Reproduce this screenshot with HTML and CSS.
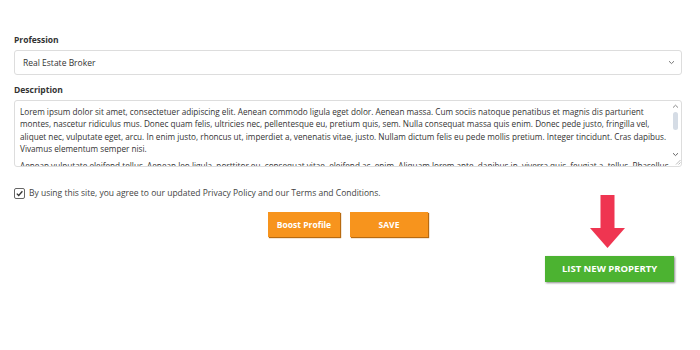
FILE: index.html
```html
<!DOCTYPE html>
<html>
<head>
<meta charset="utf-8">
<link rel="stylesheet" href="styles.css">
</head>
<body>
<div class="page">
  <div class="field">
    <div class="label">Profession</div>
    <div class="select">
      <span>Real Estate Broker</span>
      <svg class="chev" width="7" height="5" viewBox="0 0 7 5"><path d="M1 1.2 L3.5 3.6 L6 1.2" fill="none" stroke="#777" stroke-width="1"/></svg>
    </div>
  </div>
  <div class="field">
    <div class="label">Description</div>
    <div class="textarea">
      <div class="ta-text">
        <p>Lorem ipsum dolor sit amet, consectetuer adipiscing elit. Aenean commodo ligula eget dolor. Aenean massa. Cum sociis natoque penatibus et magnis dis parturient<br>montes, nascetur ridiculus mus. Donec quam felis, ultricies nec, pellentesque eu, pretium quis, sem. Nulla consequat massa quis enim. Donec pede justo, fringilla vel,<br>aliquet nec, vulputate eget, arcu. In enim justo, rhoncus ut, imperdiet a, venenatis vitae, justo. Nullam dictum felis eu pede mollis pretium. Integer tincidunt. Cras dapibus.<br>Vivamus elementum semper nisi.</p>
        <p>Aenean vulputate eleifend tellus. Aenean leo ligula, porttitor eu, consequat vitae, eleifend ac, enim. Aliquam lorem ante, dapibus in, viverra quis, feugiat a, tellus. Phasellus<br>viverra nulla ut metus varius laoreet.</p>
      </div>
      <div class="scrollbar">
        <svg width="7" height="5" viewBox="0 0 7 5"><path d="M1 3.6 L3.5 1.2 L6 3.6" fill="none" stroke="#888" stroke-width="1"/></svg>
        <div class="thumb"></div>
        <div class="track"></div>
        <svg width="7" height="5" viewBox="0 0 7 5"><path d="M1 1.2 L3.5 3.6 L6 1.2" fill="none" stroke="#666" stroke-width="1"/></svg>
        <svg class="grip" width="6" height="6" viewBox="0 0 6 6"><path d="M5.5 1 L1 5.5 M5.5 3.5 L3.5 5.5" stroke="#aaa" stroke-width="0.8"/></svg>
      </div>
    </div>
  </div>
  <label class="agree">
    <span class="checkbox">
      <svg width="9" height="9" viewBox="0 0 9 9"><path d="M1.8 4.6 L3.7 6.5 L7.4 2.3" fill="none" stroke="#333" stroke-width="1.3"/></svg>
    </span>
    <span>By using this site, you agree to our updated Privacy Policy and our Terms and Conditions.</span>
  </label>
  <div class="actions">
    <button class="btn btn-boost">Boost Profile</button>
    <button class="btn btn-save">SAVE</button>
  </div>
  <div class="list-row">
    <div class="list-wrap">
      <svg class="arrow" width="36" height="54" viewBox="0 0 36 54"><path d="M10.5 0 H24.5 V33 H35 L17.5 53 L0 33 H10.5 Z" fill="#ef3551"/></svg>
      <button class="btn btn-list">LIST NEW PROPERTY</button>
    </div>
  </div>
</div>
</body>
</html>
```

FILE: styles.css
```css
html, body {
  margin: 0;
  padding: 0;
  background: #fff;
}
body {
  font-family: "Open Sans", "Liberation Sans", sans-serif;
  color: #333;
  width: 700px;
  height: 350px;
  overflow: hidden;
}
.page {
  padding: 34px 18px 0 14px;
}
.field {
  display: flex;
  flex-direction: column;
  gap: 4px;
  margin-bottom: 9px;
}
.label {
  font-size: 8.5px;
  font-weight: 700;
  line-height: 12px;
  color: #333;
}
.select {
  height: 25px;
  box-sizing: border-box;
  border: 1px solid #ddd;
  border-radius: 3px;
  display: flex;
  align-items: center;
  justify-content: space-between;
  padding: 0 6px 0 8px;
  font-size: 8.5px;
  color: #333;
}
.textarea {
  height: 67px;
  box-sizing: border-box;
  border: 1px solid #ddd;
  border-radius: 3px;
  display: flex;
  overflow: hidden;
}
.ta-text {
  flex: 1;
  min-width: 0;
  padding: 5px 4px 0 5px;
  font-size: 8.2px;
  line-height: 12.3px;
  color: #333;
  overflow: hidden;
}
.ta-text p {
  margin: 0 0 5px 0;
  white-space: nowrap;
}
.scrollbar {
  width: 11px;
  flex-shrink: 0;
  display: flex;
  flex-direction: column;
  align-items: center;
  padding: 3px 0 1px;
  box-sizing: border-box;
}
.thumb {
  width: 5px;
  height: 18px;
  background: #d5dce5;
  border-radius: 3px;
  margin-top: 3px;
}
.track {
  flex: 1;
}
.grip {
  margin-top: 2px;
  align-self: flex-end;
}
.agree {
  display: flex;
  align-items: center;
  gap: 4px;
  margin-top: 20px;
  font-size: 8.5px;
  color: #444;
  line-height: 12px;
}
.checkbox {
  width: 11px;
  height: 11px;
  box-sizing: border-box;
  border: 1px solid #666;
  border-radius: 2px;
  display: flex;
  align-items: center;
  justify-content: center;
}
.checkbox svg {
  display: block;
}
.actions {
  display: flex;
  justify-content: center;
  gap: 10px;
  margin-top: 13px;
}
.btn {
  border: none;
  font-family: "Open Sans", "Liberation Sans", sans-serif;
  font-weight: 700;
  color: #fff;
  font-size: 8.5px;
  padding: 0;
  height: 25px;
  cursor: pointer;
}
.btn-boost, .btn-save {
  background: #f7941d;
  box-shadow: 1px 1px 1px #b86a10;
}
.btn-boost { width: 72px; }
.btn-save { width: 78px; }
.list-row {
  display: flex;
  justify-content: flex-end;
  margin-top: 18px;
  padding-right: 8px;
}
.list-wrap {
  position: relative;
}
.arrow {
  position: absolute;
  left: 45px;
  bottom: 33px;
}
.btn-list {
  width: 129px;
  height: 26px;
  background: #4cb331;
  font-size: 9.5px;
  box-shadow: 1px 1px 2px #8a8a8a;
}
```
